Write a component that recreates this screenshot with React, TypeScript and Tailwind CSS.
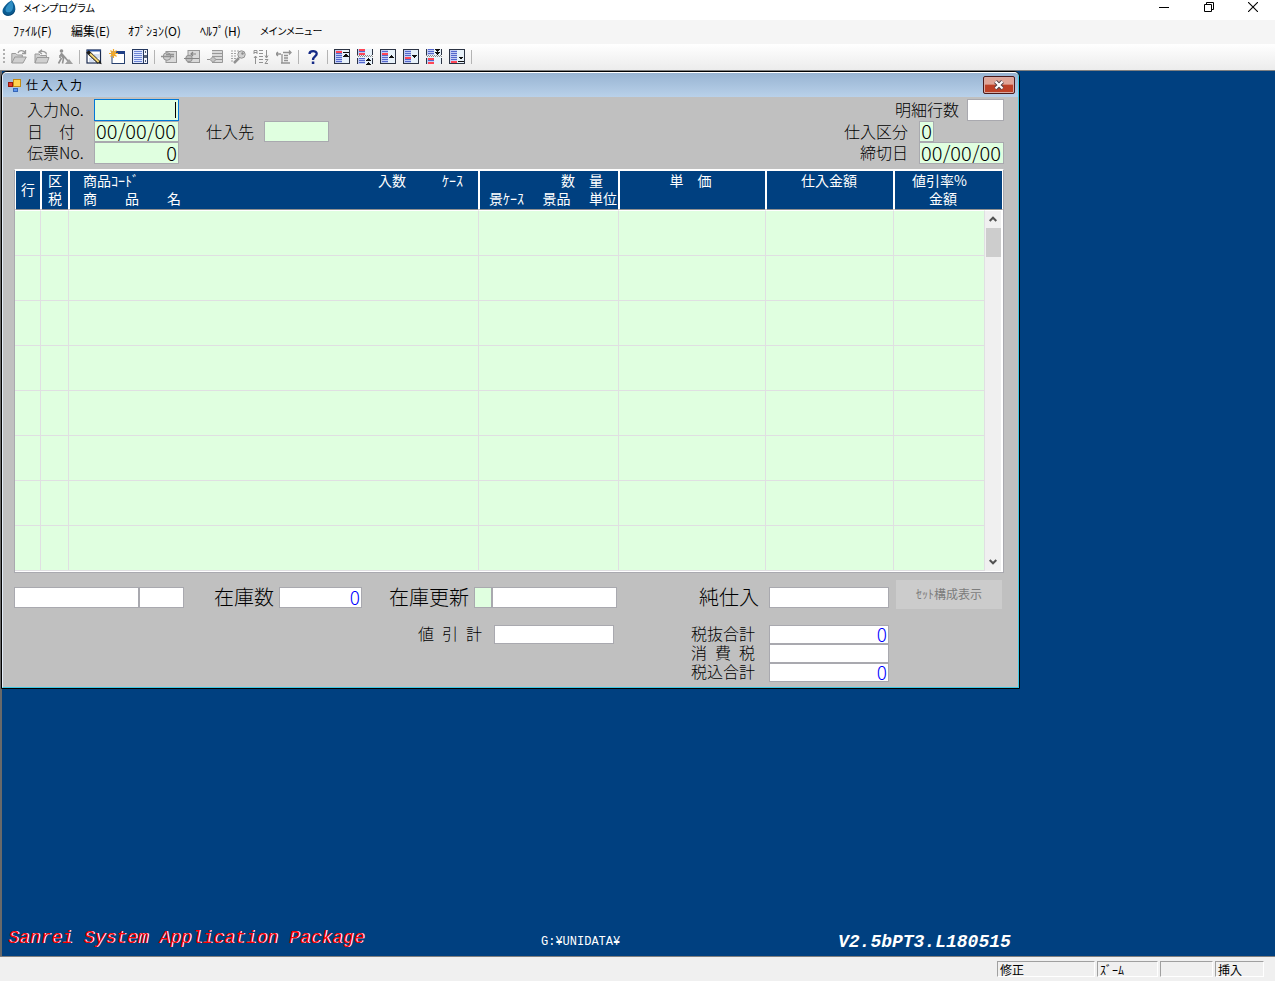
import type { ReactNode } from "react";

const gothic = "font-['Noto_Sans_CJK_JP',sans-serif]";
const field = "block h-full w-full rounded-none border pt-0 pb-[2px] pl-0 text-right text-[20px] leading-[18px] font-light text-black outline-none";
const greenField = `${field} border-[#a9a9af] bg-[#e0ffe0]`;
const smallField = "block rounded-none border border-[#a9a9af] bg-white pt-0 pr-px pb-[2px] pl-0 text-right text-[19px] leading-[16px] font-light text-[#0000ff] outline-none";

function Icon({ children, label, soft }: { children: ReactNode; label: string; soft?: boolean }) {
  return (
    <button type="button" aria-label={label} className="flex h-[22px] w-[23px] items-center justify-center">
      <svg viewBox="0 0 16 16" className="size-4" shapeRendering={soft ? "auto" : "crispEdges"} fill="none">
        {children}
      </svg>
    </button>
  );
}

function Sep() {
  return <div className="mr-[2px] ml-[3px] h-[14px] w-px bg-[#b4b4b4]" />;
}

function Rows({ red, from = 2, count = 6 }: { red: number[]; from?: number; count?: number }) {
  return (
    <>
      {Array.from({ length: count }, (_, i) => (
        <rect key={i} x="2" y={from + i * 2} width="6" height={red.includes(i) ? 2 : 1} fill={red.includes(i) ? "#ff4656" : "#5468cc"} />
      ))}
    </>
  );
}

function Boxed({ red, children }: { red: number[]; children: ReactNode }) {
  return (
    <>
      <rect x="0" y="0" width="16" height="15" fill="#2c3444" />
      <rect x="1" y="1" width="14" height="13" fill="#e8f2fa" />
      <rect x="1" y="1" width="7" height="13" fill="#c3cdf4" />
      <Rows red={red} />
      {children}
    </>
  );
}

function Split({ redTop, children }: { redTop: boolean; children: ReactNode }) {
  return (
    <>
      <rect x="1" y="0" width="14" height="15" fill="#e8f2fa" />
      <path d="M0 0h1v6H0zM0 9h1v6H0zM15 0h1v6h-1zM15 9h1v6h-1z" fill="#2c3444" />
      <rect x="1" y="0" width="7" height="6" fill="#c3cdf4" />
      <rect x="1" y="9" width="7" height="6" fill="#c3cdf4" />
      <Rows red={redTop ? [0, 2] : []} from={0} count={3} />
      <Rows red={redTop ? [] : [0, 2]} from={9} count={3} />
      <path d="M0 6.500h16" stroke="#8a8a8a" strokeDasharray="1 1" />
      <path d="M1 7.500h15" stroke="#8a8a8a" strokeDasharray="1 1" />
      {children}
    </>
  );
}

function Toolbar() {
  return (
    <div className="flex h-[26px] items-center bg-linear-to-b from-white to-[#ececec] pl-[3px]">
      <svg viewBox="0 0 2 16" className="mr-[2px] h-4 w-[2px]" aria-hidden="true">
        <path d="M1 0v16" stroke="#b0b0b0" strokeWidth="2" strokeDasharray="2 2" />
      </svg>
      <Icon label="開く" soft>
        <path d="M.8 14V4.500h4l1.500 1.500h5V8M.8 14l3-6h11.500l-3.300 6z" fill="#cfcfcf" stroke="#9a9a9a" />
        <path d="M7 4c1-3 5-3 7-.5M14.500 1v3.500H11" stroke="#9a9a9a" strokeWidth="1.300" />
      </Icon>
      <Icon label="閉じる" soft>
        <path d="M1 14V5h4l1.500 1.500h6V9M1 14l2-5.500h12L13 14z" fill="#cfcfcf" stroke="#9a9a9a" />
        <path d="M12.500 5.500c0-3-4-4-7-2.500M8 .8L5 3l3 2" stroke="#9a9a9a" strokeWidth="1.300" />
      </Icon>
      <Icon label="実行" soft>
        <circle cx="4.500" cy="2" r="1.800" fill="#929292" />
        <path d="M3.500 5l3 4.500-1 5M4.500 9L1.500 14.500M5 5l4 4.500M3 6v3M4 4l7 8" stroke="#929292" strokeWidth="1.600" />
        <path d="M8 15l4-5 4 5z" fill="#a0a0a0" />
      </Icon>
      <Sep />
      <Icon label="修正" soft>
        <rect x="1" y="1" width="13.500" height="13" fill="#fff" stroke="#1c2c50" strokeWidth="1.200" />
        <path d="M1 1.700h13.500" stroke="#2b55a5" strokeWidth="1.600" />
        <path d="M8.500 8h5M8 6h5.500M3 10h3M3 12h5" stroke="#a9bfe4" />
        <path d="M1.500 2.500L13 13.500" stroke="#1b1b1b" strokeWidth="3.800" />
        <path d="M4 4.800L13 13.300" stroke="#f3d675" strokeWidth="2" />
        <path d="M12 13.800l3.700 1.500-1.500-3.700z" fill="#1b1b1b" />
      </Icon>
      <Icon label="新規" soft>
        <rect x="3" y="3" width="12.500" height="11.500" fill="#fff" stroke="#27406e" />
        <path d="M7 3.500h9" stroke="#1f3f86" strokeWidth="3" />
        <path d="M4.500 0v9M0 4.500h9M1.500 1.500l6 6M7.500 1.500l-6 6" stroke="#f2a92a" strokeWidth="1.200" />
      </Icon>
      <Icon label="一覧">
        <rect x="0" y="0" width="16" height="15" fill="#24375e" />
        <rect x="1" y="1" width="10" height="13" fill="#dfe7ff" />
        <rect x="12" y="1" width="3" height="13" fill="#f2f6ff" />
        <path d="M2 2h8v1H2zM2 4h8v1H2zM2 6h8v1H2zM2 8h8v1H2zM2 10h8v1H2zM2 12h8v1H2z" fill="#6d86d6" />
        <path d="M13 2h1v2h-1zM12 6h3v3h-3zM13 11h1v2h-1z" fill="#59647a" />
      </Icon>
      <Sep />
      <Icon label="挿入" soft>
        <rect x="5" y="2.500" width="10.500" height="11" fill="#d9d9d9" stroke="#979797" />
        <circle cx="6" cy="7.500" r="3.800" fill="#d0d0d0" stroke="#929292" />
        <path d="M0 7.500h13M5 5.500h8" stroke="#929292" strokeWidth="1.300" />
      </Icon>
      <Icon label="行挿入" soft>
        <rect x="4" y="1.500" width="11.500" height="12" fill="#d9d9d9" stroke="#979797" />
        <circle cx="5" cy="9.500" r="3.300" fill="#bdbdbd" stroke="#929292" />
        <path d="M0 9.500h15M7 5h5M9 3L7 5l2 2" stroke="#858585" strokeWidth="1.200" />
      </Icon>
      <Icon label="行削除" soft>
        <path d="M5 1.500h10.500v12H5M5 4.500h10M5 7.500h10M7 10.500h8" stroke="#979797" fill="#d9d9d9" />
        <path d="M0 10.500h3l3-3 3 3-3 3-3-3" fill="#c4c4c4" stroke="#929292" />
      </Icon>
      <Icon label="検索" soft>
        <path d="M1 2h9M1 4.500h6M1 7h6M1 9.500h5M1 12h3" stroke="#a2a2a2" strokeDasharray="2 1" />
        <path d="M4 14l5-5" stroke="#929292" strokeWidth="2.500" />
        <circle cx="11.500" cy="5.500" r="3.700" fill="#d2d2d2" stroke="#929292" />
        <circle cx="12.500" cy="4.500" r="1.200" fill="#8c8c8c" />
      </Icon>
      <Icon label="並べ替え" soft>
        <path d="M1 5V1.500h3V5M1 3.500h3M2.500 7v8M1 9l1.500-2L4 9M6 1.500h4M6 4.500h4M6 7.500h4M6 10.500h4M6 13.500h4M13.500 1v7M12 6.500L13.500 9 15 6.500M12 10.500h3l-3 4h3" stroke="#929292" />
      </Icon>
      <Icon label="移動" soft>
        <path d="M0 5h5M2 3L0 5l2 2M14 3.500H7M13 1.500l2 2-2 2M6 5v9h8M8 6.500h4M8 9h4M8 11.500h4M5 14h9" stroke="#929292" strokeWidth="1.300" />
      </Icon>
      <Sep />
      <Icon label="ヘルプ" soft>
        <path d="M4.500 5c0-3.800 7.200-3.800 7.200-.2C11.700 7.500 8 7.500 8 11" stroke="#152a86" strokeWidth="2.300" />
        <rect x="6.800" y="12.500" width="2.500" height="2.500" fill="#152a86" />
      </Icon>
      <Sep />
      <Icon label="先頭">
        <Boxed red={[0]}>
          <path d="M9 3h6v1H9z" fill="#111" />
          <path d="M9 8l3-3.500L15 8z" fill="#111" />
        </Boxed>
      </Icon>
      <Icon label="前ページ">
        <Split redTop>
          <path d="M9 12l2.500-3L14 12zM9 15.500l2.500-3 2.500 3z" fill="#111" />
        </Split>
      </Icon>
      <Icon label="前行">
        <Boxed red={[1]}>
          <path d="M9 9l2.500-3L14 9z" fill="#111" />
        </Boxed>
      </Icon>
      <Icon label="次行">
        <Boxed red={[3]}>
          <path d="M9 6l2.500 3L14 6z" fill="#111" />
        </Boxed>
      </Icon>
      <Icon label="次ページ">
        <Split redTop={false}>
          <path d="M9 0l2.500 3L14 0zM9 3l2.500 3L14 3z" fill="#111" />
        </Split>
      </Icon>
      <Icon label="最終">
        <Boxed red={[5]}>
          <path d="M9 7.500l3 3.500 3-3.500z" fill="#111" />
          <path d="M9 12h6v1H9z" fill="#111" />
        </Boxed>
      </Icon>
      <Sep />
    </div>
  );
}

function AppTitle() {
  return (
    <header className="flex h-5 items-start justify-between bg-white pl-[2px]">
      <div className="flex items-start gap-[5px]">
        <svg viewBox="0 0 16 16" className="size-4" aria-hidden="true">
          <path d="M9.500.3C6 2.500.5 7 .5 11c0 3 2.500 4.700 5.500 4.700 4.500 0 7.300-3 7.300-7.200C13.300 5 11.500 2 9.500.3z" fill="#0b5c92" />
          <path d="M9.500.3C8 3 3.500 6.500 3.500 10c0 2.500 3.500 3 5.500 1.500C12 9.200 11.500 4 9.500.3z" fill="#2f8ec4" />
          <path d="M1 11.500c1 3 5 4.500 8.500 2.500 2-1.200 3.500-3 3.800-5.500C13.300 13 10 15.700 6 15.700c-2.500 0-4.500-1.500-5-4.200z" fill="#063c66" />
        </svg>
        <h1 className="text-[10px] leading-4 text-black [font-feature-settings:'palt']">メインプログラム</h1>
      </div>
      <div className="flex h-full">
        <button type="button" aria-label="最小化" className="flex w-[46px] items-start justify-center pt-[3px]">
          <svg viewBox="0 0 10 10" className="size-[10px]"><path d="M0 4.500h10" stroke="#000" /></svg>
        </button>
        <button type="button" aria-label="元に戻す" className="flex w-11 items-start justify-center pt-[2px]">
          <svg viewBox="0 0 10 10" className="size-[10px]" fill="none"><path d="M.5 2.500h7v7h-7zM2.500 2.500v-2h7v7h-2" stroke="#000" /></svg>
        </button>
        <button type="button" aria-label="終了" className="flex w-11 items-start justify-center pt-[2px]">
          <svg viewBox="0 0 10 10" className="size-[10px]"><path d="M0 0l10 10M10 0L0 10" stroke="#000" strokeWidth="1.100" /></svg>
        </button>
      </div>
    </header>
  );
}

function EntryHeader() {
  const label = "text-[16px] leading-[20px] font-light whitespace-pre";
  return (
    <div className="flex justify-between">
      <div className="grid grid-cols-[67px_85px_27px_58px_65px] grid-rows-[22px_21px_22px] pl-[13px]">
        <label htmlFor="entryNo" className={label}>入力No.</label>
        <div className="relative">
          <input id="entryNo" className={`${field} border-[#0078d7] bg-[#e0ffe0] pr-px`} />
          <span className="absolute top-[3px] right-[3px] h-4 w-px bg-black" />
        </div>
        <span className="col-span-3" />
        <label htmlFor="date" className={label}>日　付</label>
        <input id="date" defaultValue="00/00/00" className={`${greenField} pr-[2px]`} />
        <span />
        <label htmlFor="supplier" className={label}>仕入先</label>
        <input id="supplier" className={`${greenField} pr-px`} />
        <label htmlFor="slip" className={label}>伝票No.</label>
        <input id="slip" defaultValue="0" className={`${greenField} pr-px`} />
      </div>
      <div className="flex flex-col">
        <div className="flex h-[22px] justify-end gap-2">
          <label htmlFor="lines" className={label}>明細行数</label>
          <div className="w-[37px]"><input id="lines" className={`${field} border-[#a9a9af] bg-white pr-px`} /></div>
        </div>
        <div className="grid grid-cols-[auto_85px] grid-rows-[21px_22px] gap-x-[11px]">
          <label htmlFor="kind" className={`${label} text-right`}>仕入区分</label>
          <div className="w-[15px]"><input id="kind" defaultValue="0" className={`${greenField} pr-px`} /></div>
          <label htmlFor="closing" className={`${label} text-right`}>締切日</label>
          <input id="closing" defaultValue="00/00/00" className={`${greenField} pr-[2px]`} />
        </div>
      </div>
    </div>
  );
}

function ScrollBar() {
  return (
    <div className="flex h-[360px] flex-col items-center border-r-2 border-white bg-[#f0f0f0]">
      <button type="button" aria-label="上へ" className="flex h-[17px] w-full items-center justify-center">
        <svg viewBox="0 0 8 6" className="h-[6px] w-2" fill="none"><path d="M.7 5L4 1.700 7.300 5" stroke="#505050" strokeWidth="2" /></svg>
      </button>
      <div className="h-[29px] w-[15px] bg-[#cdcdcd]" />
      <button type="button" aria-label="下へ" className="mt-auto flex h-[17px] w-full items-center justify-center">
        <svg viewBox="0 0 8 6" className="h-[6px] w-2" fill="none"><path d="M.7 1L4 4.300 7.300 1" stroke="#505050" strokeWidth="2" /></svg>
      </button>
    </div>
  );
}

function DetailTable() {
  const th = "border-x border-t border-b border-x-white border-t-white border-b-[#909090] bg-[#004080] p-0 align-top font-normal";
  return (
    <div className="mt-[5px] border border-t-white border-l-[#a9a9af] border-r-[#a9a9af] border-b-[#a9a9af] bg-white pb-px">
      <table className="w-full table-fixed border-separate border-spacing-0 text-left text-[14px] leading-[18px] whitespace-pre text-white">
        <colgroup>
          <col className="w-[26px]" />
          <col className="w-[28px]" />
          <col />
          <col className="w-[140px]" />
          <col className="w-[147px]" />
          <col className="w-[128px]" />
          <col className="w-[91px]" />
          <col className="w-[18px]" />
        </colgroup>
        <thead>
          <tr className="h-10">
            <th className={`${th} text-center`}><div className="leading-[36px]">行</div></th>
            <th className={`${th} text-center`}>区<br />税</th>
            <th className={th}>
              <div className="flex pr-[15px] pl-[13px]">
                <span>商品ｺｰﾄﾞ</span>
                <span className="ml-auto">入数</span>
                <span className="ml-9">ｹｰｽ</span>
              </div>
              <div className="pl-[13px]">商　　品　　名</div>
            </th>
            <th className={th}>
              <div className="pr-[15px] text-right">数　量</div>
              <div className="flex justify-between pr-px pl-[9px]">
                <span>景ｹｰｽ</span>
                <span>景品</span>
                <span>単位</span>
              </div>
            </th>
            <th className={`${th} text-center`}><div className="pr-1">単　価</div></th>
            <th className={`${th} text-center`}><div className="pr-[2px]">仕入金額</div></th>
            <th colSpan={2} className={th}>
              <div className="pl-[17px]">値引率%</div>
              <div className="pl-[34px]">金額</div>
            </th>
          </tr>
        </thead>
        <tbody>
          {Array.from({ length: 8 }, (_, row) => (
            <tr key={row} className={row === 0 ? "h-[46px]" : "h-[45px]"}>
              {Array.from({ length: 7 }, (_, col) => (
                <td key={col} className={`border-r border-b border-[#e0dfe2] bg-[#e0ffe0] p-0 ${row === 0 ? "border-t border-t-white" : ""}`} />
              ))}
              {row === 0 && <td rowSpan={8} className="p-0"><ScrollBar /></td>}
            </tr>
          ))}
        </tbody>
      </table>
    </div>
  );
}

function EntryFooter() {
  const big = "text-[20px] leading-[20px] font-light";
  const mid = "text-[16px] leading-[17px] font-light whitespace-pre";
  return (
    <div className="pt-[7px] pb-[5px]">
      <div className="flex items-end">
        <div className="mb-px flex h-[21px] items-stretch">
          <input aria-label="商品" className={`${smallField} w-[125px]`} />
          <input aria-label="単位" className={`${smallField} w-[45px]`} />
          <label htmlFor="stock" className={`${big} mr-[5px] ml-[30px]`}>在庫数</label>
          <input id="stock" defaultValue="0" className={`${smallField} w-[83px]`} />
          <label htmlFor="update" className={`${big} mr-[5px] ml-[27px]`}>在庫更新</label>
          <input id="update" className="w-[18px] border border-[#a9a9af] bg-[#e0ffe0]" />
          <input aria-label="在庫更新名" className={`${smallField} w-[125px]`} />
        </div>
        <div className="ml-auto flex items-end pr-[2px]">
          <label htmlFor="net" className={`${big} mr-[10px] mb-[2px]`}>純仕入</label>
          <input id="net" className={`${smallField} mb-px h-[21px] w-[120px]`} />
          <button type="button" disabled className="ml-[7px] h-[29px] w-[106px] bg-[#cccccc] pb-[2px] text-[12px] text-[#7c7c7c]">ｾｯﾄ構成表示</button>
        </div>
      </div>
      <div className="mt-4 flex items-start justify-between pr-[115px] pl-[404px]">
        <div className="flex h-[19px] gap-3">
          <label htmlFor="discount" className={mid}>{"値\u2002引\u2002計"}</label>
          <input id="discount" className={`${smallField} h-[19px] w-[120px]`} />
        </div>
        <div className="grid auto-rows-[19px] grid-cols-[auto_120px] gap-x-[14px]">
          <label htmlFor="exTax" className={mid}>税抜合計</label>
          <input id="exTax" defaultValue="0" className={smallField} />
          <label htmlFor="tax" className={mid}>{"消\u2002費\u2002税"}</label>
          <input id="tax" className={smallField} />
          <label htmlFor="incTax" className={mid}>税込合計</label>
          <input id="incTax" defaultValue="0" className={smallField} />
        </div>
      </div>
    </div>
  );
}

function EntryWindow() {
  return (
    <section className="absolute top-0 left-[-1px] w-[1019px] rounded-t-[6px] border border-black bg-[#c0c0c0]">
      <div className="rounded-t-[5px] border border-t-white border-r-[#3cc8e6] border-b-[#3cc8e6] border-l-[#e4eefa]">
        <div className="flex h-6 items-center justify-between rounded-t-[4px] bg-linear-to-b from-[#98b4d2] to-[#b9d1ea] pr-[3px] pl-[5px]">
          <div className="flex items-center gap-[5px]">
            <svg viewBox="0 0 13 13" className="size-[13px]" aria-hidden="true">
              <rect x="5.500" y=".5" width="7" height="7" fill="#ffd350" stroke="#c48a12" />
              <rect x=".5" y="3.500" width="4" height="4" fill="#e03a2a" stroke="#98190f" />
              <rect x="5.500" y="9.500" width="4" height="3" fill="#5b94ee" stroke="#3566b8" />
            </svg>
            <h2 className="text-[12px] leading-4 text-black">仕 入 入 力</h2>
          </div>
          <button type="button" aria-label="閉じる" className="flex h-[18px] w-8 items-center justify-center rounded-[2px] border border-[#4b1a1a] bg-linear-to-b from-[#e0a597] from-45% to-[#bd4127] to-50% ring-1 ring-[#d8aaa4] ring-inset">
            <svg viewBox="0 0 12 10" className="h-[10px] w-3">
              <path d="M2.500 1.500l7 7M9.500 1.500l-7 7" stroke="#53444a" strokeWidth="4" />
              <path d="M2.500 1.500l7 7M9.500 1.500l-7 7" stroke="#fff" strokeWidth="2.200" />
            </svg>
          </button>
        </div>
        <div className="pt-[2px] pr-[14px] pl-[11px] text-black">
          <EntryHeader />
          <DetailTable />
          <EntryFooter />
        </div>
      </div>
    </section>
  );
}

export default function App() {
  const panel = "h-4 border-t border-l border-t-[#a0a0a0] border-l-[#a0a0a0] border-r border-b border-r-white border-b-white pl-[2px] text-[12px] leading-4";
  return (
    <div className={`flex min-h-screen flex-col overflow-hidden bg-[#f0f0f0] ${gothic}`}>
      <AppTitle />
      <nav className="grid h-6 grid-cols-[58px_57px_72px_60px_auto] items-center bg-[#f5f5f5] pb-[2px] pl-[13px] text-[12px] leading-4 text-black">
        <a href="#file">ﾌｧｲﾙ(F)</a>
        <a href="#edit">編集(E)</a>
        <a href="#option">ｵﾌﾟｼｮﾝ(O)</a>
        <a href="#help">ﾍﾙﾌﾟ(H)</a>
        <a href="#main" className="text-[10px] [font-feature-settings:'palt']">メインメニュー</a>
      </nav>
      <Toolbar />
      <div className="h-px bg-[#808080]" />
      <main className="relative flex flex-1 flex-col justify-end border-l-2 border-l-[#696969] bg-[#004080]">
        <EntryWindow />
        <div className="grid h-7 grid-cols-[533px_297px_auto] items-center pl-[6px] font-['Liberation_Mono',monospace] text-white">
          <p className="self-start text-[18px] leading-[20px] text-[#ff0000] italic [text-shadow:1px_0_0_#fff]">Sanrei System Application Package</p>
          <p className="text-[12px]">G:¥UNIDATA¥</p>
          <p className="text-[18px] font-bold italic">V2.5bPT3.L180515</p>
        </div>
      </main>
      <footer className="flex h-[25px] items-center justify-end gap-[2px] border-t border-[#808080] bg-[#f0f0f0] pr-[11px] text-black">
        <div className={`${panel} w-[98px]`}>修正</div>
        <div className={`${panel} w-[61px]`}>ｽﾞｰﾑ</div>
        <div className={`${panel} w-[53px]`} />
        <div className={`${panel} w-[49px]`}>挿入</div>
      </footer>
    </div>
  );
}
